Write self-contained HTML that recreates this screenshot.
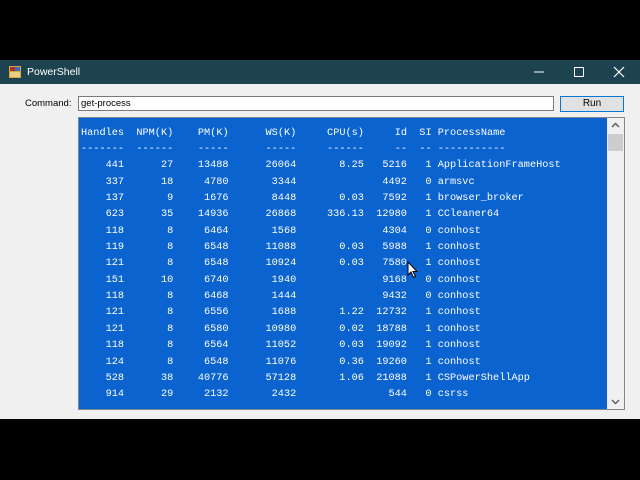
<!DOCTYPE html>
<html><head><style>
*{margin:0;padding:0;box-sizing:border-box}
body{width:640px;height:480px;background:#000;position:relative;overflow:hidden;font-family:"Liberation Sans",sans-serif}
#title{position:absolute;left:0;top:60px;width:640px;height:24px;background:#1e4350;color:#fff;font-size:12px}
#win{position:absolute;left:0;top:84px;width:640px;height:335px;background:#f0f0f0}
.lbl{position:absolute;font-size:9.5px;color:#000}
#cmd{position:absolute;left:78px;top:96px;width:476px;height:15px;background:#fff;border:1px solid #7a7a7a;font-size:9.5px;padding-left:2px;line-height:13px}
#run{position:absolute;left:560px;top:96px;width:64px;height:16px;background:#e1e1e1;border:1px solid #0078d7;font-size:10px;text-align:center;line-height:14px}
#out{position:absolute;left:78px;top:117px;width:547px;height:293px;background:#0a63cf;border:1px solid #828790;overflow:hidden}
#txt{position:absolute;left:2px;top:6.5px;font-family:"Liberation Mono",monospace;font-size:10.25px;color:#fff;white-space:pre}
.r{height:16.36px;line-height:16.36px}
.r span{display:inline-block;text-align:right}
.a{width:7ch}.b{width:8ch}.c{width:9ch}.d{width:11ch}.e{width:11ch}.f{width:7ch}.g{width:4ch}
#sb{position:absolute;left:528px;top:0;width:17px;height:291px;background:#f0f0f0}
#thumb{position:absolute;left:1px;top:16px;width:15px;height:17px;background:#cdcdcd}
</style></head><body>
<div id="title">
<svg style="position:absolute;left:9px;top:6px" width="12" height="12"><rect x="0" y="0" width="12" height="12" fill="#d9a441"/><rect x="1" y="1" width="5" height="4" fill="#b03020"/><rect x="6" y="1" width="5" height="4" fill="#3a6fc0"/><rect x="1" y="6" width="10" height="5" fill="#e8d080"/></svg>
<span style="position:absolute;left:27px;top:6px;font-size:10.5px">PowerShell</span>
<svg style="position:absolute;left:534px;top:6px" width="100" height="12"><line x1="0" y1="6" x2="10" y2="6" stroke="#fff"/><rect x="40.5" y="1.5" width="9" height="9" fill="none" stroke="#fff"/><path d="M80 1L90 11M90 1L80 11" stroke="#fff" stroke-width="1.2"/></svg>
</div>
<div id="win"></div>
<div class="lbl" style="left:25px;top:98px">Command:</div>
<div id="cmd">get-process</div>
<div id="run">Run</div>
<div id="out">
<div id="txt"><div class="r">Handles  NPM(K)    PM(K)      WS(K)     CPU(s)     Id  SI ProcessName</div><div class="r">-------  ------    -----      -----     ------     --  -- -----------</div><div class="r"><span class="a">441</span><span class="b">27</span><span class="c">13488</span><span class="d">26064</span><span class="e">8.25</span><span class="f">5216</span><span class="g">1</span> ApplicationFrameHost</div><div class="r"><span class="a">337</span><span class="b">18</span><span class="c">4780</span><span class="d">3344</span><span class="e"></span><span class="f">4492</span><span class="g">0</span> armsvc</div><div class="r"><span class="a">137</span><span class="b">9</span><span class="c">1676</span><span class="d">8448</span><span class="e">0.03</span><span class="f">7592</span><span class="g">1</span> browser_broker</div><div class="r"><span class="a">623</span><span class="b">35</span><span class="c">14936</span><span class="d">26868</span><span class="e">336.13</span><span class="f">12980</span><span class="g">1</span> CCleaner64</div><div class="r"><span class="a">118</span><span class="b">8</span><span class="c">6464</span><span class="d">1568</span><span class="e"></span><span class="f">4304</span><span class="g">0</span> conhost</div><div class="r"><span class="a">119</span><span class="b">8</span><span class="c">6548</span><span class="d">11088</span><span class="e">0.03</span><span class="f">5988</span><span class="g">1</span> conhost</div><div class="r"><span class="a">121</span><span class="b">8</span><span class="c">6548</span><span class="d">10924</span><span class="e">0.03</span><span class="f">7580</span><span class="g">1</span> conhost</div><div class="r"><span class="a">151</span><span class="b">10</span><span class="c">6740</span><span class="d">1940</span><span class="e"></span><span class="f">9168</span><span class="g">0</span> conhost</div><div class="r"><span class="a">118</span><span class="b">8</span><span class="c">6468</span><span class="d">1444</span><span class="e"></span><span class="f">9432</span><span class="g">0</span> conhost</div><div class="r"><span class="a">121</span><span class="b">8</span><span class="c">6556</span><span class="d">1688</span><span class="e">1.22</span><span class="f">12732</span><span class="g">1</span> conhost</div><div class="r"><span class="a">121</span><span class="b">8</span><span class="c">6580</span><span class="d">10980</span><span class="e">0.02</span><span class="f">18788</span><span class="g">1</span> conhost</div><div class="r"><span class="a">118</span><span class="b">8</span><span class="c">6564</span><span class="d">11052</span><span class="e">0.03</span><span class="f">19092</span><span class="g">1</span> conhost</div><div class="r"><span class="a">124</span><span class="b">8</span><span class="c">6548</span><span class="d">11076</span><span class="e">0.36</span><span class="f">19260</span><span class="g">1</span> conhost</div><div class="r"><span class="a">528</span><span class="b">38</span><span class="c">40776</span><span class="d">57128</span><span class="e">1.06</span><span class="f">21088</span><span class="g">1</span> CSPowerShellApp</div><div class="r"><span class="a">914</span><span class="b">29</span><span class="c">2132</span><span class="d">2432</span><span class="e"></span><span class="f">544</span><span class="g">0</span> csrss</div></div>
<div id="sb"><svg style="position:absolute;left:4px;top:4px" width="9" height="6"><path d="M1 5L4.5 1.5L8 5" stroke="#606060" fill="none" stroke-width="1.5"/></svg><div id="thumb"></div><svg style="position:absolute;left:4px;top:281px" width="9" height="6"><path d="M1 1L4.5 4.5L8 1" stroke="#606060" fill="none" stroke-width="1.5"/></svg></div>
</div>
<svg style="position:absolute;left:407px;top:261px" width="12" height="18"><path d="M1 1L1 14L4 11L6.5 16.5L8.5 15.5L6 10.5L10 10.5Z" fill="#fff" stroke="#000" stroke-width="1"/></svg>
</body></html>
